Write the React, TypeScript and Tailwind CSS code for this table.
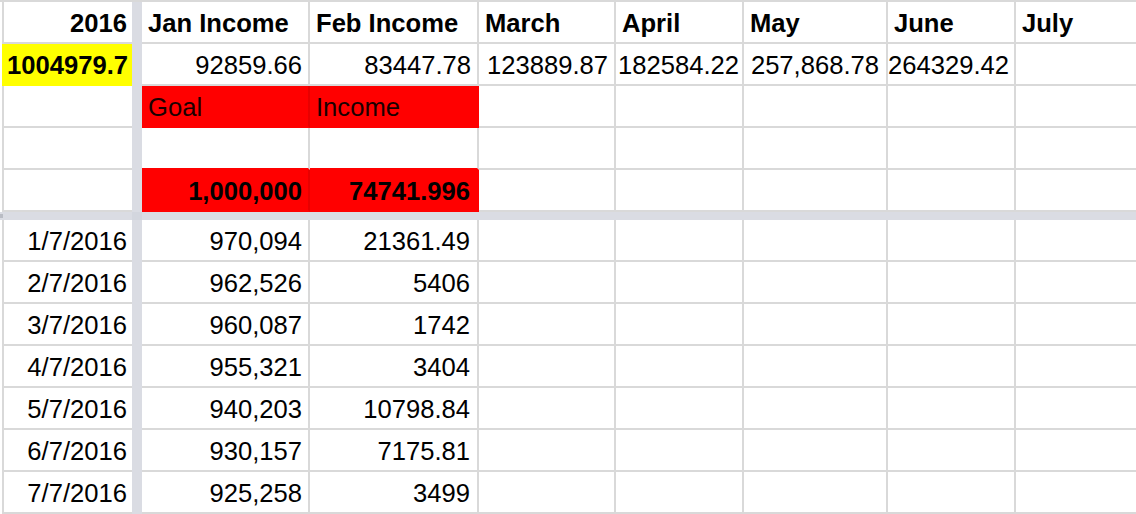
import React from "react";

const FONT = { fontFamily: '"Liberation Sans", Arial, sans-serif' };

type CellProps = {
  w: string;
  children?: React.ReactNode;
  cls?: string;
};

function C({ w, children, cls = "" }: CellProps) {
  return (
    <div
      className={`${w} h-[42px] shrink-0 flex items-end pb-[5px] leading-none overflow-visible whitespace-nowrap ${cls}`}
    >
      {children}
    </div>
  );
}

const A = "w-[130px] border-l-2 border-b-2 border-[#d9d9d9] justify-end pr-[5px]";
const J = "w-[168px] border-r-2 border-b-2 border-[#d9d9d9]";
const F = "w-[169px] border-r-2 border-b-2 border-[#d9d9d9]";
const M = "w-[137px] border-r-2 border-b-2 border-[#d9d9d9]";
const P = "w-[128px] border-r-2 border-b-2 border-[#d9d9d9]";
const Y = "w-[144px] border-r-2 border-b-2 border-[#d9d9d9]";
const U = "w-[128px] border-r-2 border-b-2 border-[#d9d9d9]";
const L = "flex-1 border-b-2 border-[#d9d9d9]";

function Freeze() {
  return <div className="w-[10px] h-[42px] shrink-0 bg-[#dadce3]" />;
}

const data: [string, string, string][] = [
  ["1/7/2016", "970,094", "21361.49"],
  ["2/7/2016", "962,526", "5406"],
  ["3/7/2016", "960,087", "1742"],
  ["4/7/2016", "955,321", "3404"],
  ["5/7/2016", "940,203", "10798.84"],
  ["6/7/2016", "930,157", "7175.81"],
  ["7/7/2016", "925,258", "3499"],
];

export default function App() {
  return (
    <div
      className="w-[1136px] h-[514px] overflow-hidden bg-white text-black text-[25.6px] pl-[2px]"
      style={FONT}
    >
      <div className="h-[2px] -ml-[2px] bg-[#d9d9d9]" />
      {/* header */}
      <div className="flex font-bold">
        <C w={A}>2016</C>
        <Freeze />
        <C w={J} cls="pl-[6px]">Jan Income</C>
        <C w={F} cls="pl-[6px]">Feb Income</C>
        <C w={M} cls="pl-[6px]">March</C>
        <C w={P} cls="pl-[6px]">April</C>
        <C w={Y} cls="pl-[6px]">May</C>
        <C w={U} cls="pl-[6px]">June</C>
        <C w={L} cls="pl-[6px]">July</C>
      </div>
      {/* row 2 */}
      <div className="flex">
        <C w="w-[130px] border-l-2 border-b-2 border-[#ffff00] bg-[#ffff00] justify-end pr-[4px] font-bold">
          1004979.7
        </C>
        <Freeze />
        <C w={J} cls="justify-end pr-[6px]">92859.66</C>
        <C w={F} cls="justify-end pr-[6px]">83447.78</C>
        <C w={M} cls="justify-end pr-[6px]">123889.87</C>
        <C w={P} cls="justify-end pr-[3px]">182584.22</C>
        <C w={Y} cls="justify-end pr-[7px]">257,868.78</C>
        <C w={U} cls="justify-end pr-[5px]">264329.42</C>
        <C w={L} />
      </div>
      {/* row 3 */}
      <div className="flex">
        <C w={A} />
        <Freeze />
        <C w="w-[168px] border-r-2 border-b-2 border-b-[#ff0000] border-r-[#e80000] bg-[#ff0000] pl-[6px] text-[#1a0000]">
          Goal
        </C>
        <C w="w-[169px] border-r-2 border-b-2 border-[#ff0000] bg-[#ff0000] pl-[6px] text-[#1a0000]">
          Income
        </C>
        <C w={M} />
        <C w={P} />
        <C w={Y} />
        <C w={U} />
        <C w={L} />
      </div>
      {/* row 4 */}
      <div className="flex">
        <C w={A} />
        <Freeze />
        <C w="w-[168px] border-r-2 border-b-2 border-r-[#d9d9d9] border-b-[#ff0000]" />
        <C w="w-[169px] border-r-2 border-b-2 border-r-[#d9d9d9] border-b-[#ff0000]" />
        <C w={M} />
        <C w={P} />
        <C w={Y} />
        <C w={U} />
        <C w={L} />
      </div>
      {/* row 5 */}
      <div className="flex font-bold">
        <C w={A} />
        <Freeze />
        <C w="w-[168px] border-r-2 border-b-2 border-b-[#ff0000] border-r-[#e80000] bg-[#ff0000] justify-end pr-[6px]">
          1,000,000
        </C>
        <C w="w-[169px] border-r-2 border-b-2 border-[#ff0000] bg-[#ff0000] justify-end pr-[7px]">
          74741.996
        </C>
        <C w={M} />
        <C w={P} />
        <C w={Y} />
        <C w={U} />
        <C w={L} />
      </div>
      {/* freeze row */}
      <div className="flex h-[8px] -ml-[2px] bg-[#dadce3]">
        <div className="w-[132px] h-[8px] flex items-center">
          <div className="w-[3px] h-[4px] bg-[#b9bcc4]" />
        </div>
        <div className="w-[10px] h-[8px] bg-[#d3d6de]" />
      </div>
      {data.map(([d, a, b]) => (
        <div className="flex" key={d}>
          <C w={A}>{d}</C>
          <Freeze />
          <C w={J} cls="justify-end pr-[6px]">{a}</C>
          <C w={F} cls="justify-end pr-[7px]">{b}</C>
          <C w={M} />
          <C w={P} />
          <C w={Y} />
          <C w={U} />
          <C w={L} />
        </div>
      ))}
    </div>
  );
}
